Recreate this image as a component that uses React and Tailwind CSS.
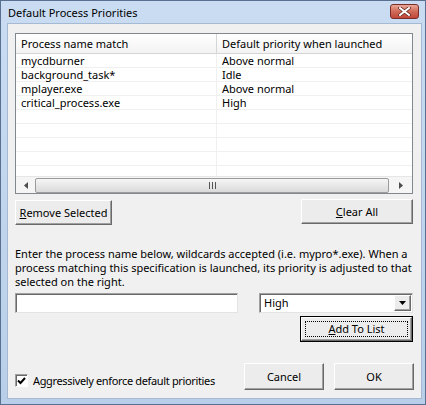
import React from "react";

const rows = [
  ["mycdburner", "Above normal"],
  ["background_task*", "Idle"],
  ["mplayer.exe", "Above normal"],
  ["critical_process.exe", "High"],
  ["", ""],
  ["", ""],
  ["", ""],
  ["", ""],
  ["", ""],
];

const btn =
  "flex items-center justify-center whitespace-nowrap bg-[#ececec] border border-t-white border-l-white border-r-[#696969] border-b-[#696969] shadow-[inset_-1px_-1px_#a0a0a0]";

const Button = ({ className, children }) => (
  <button type="button" className={`${btn} ${className}`}>
    {children}
  </button>
);

const App = () => {
  return (
    <div className="w-[426px] h-[405px] flex flex-col bg-gradient-to-b from-[#c9dcf2] to-[#b9cfe9] pl-[6px] pr-[3px] pb-[5px] font-['Noto_Sans',sans-serif] text-[11px] text-black leading-[14px] overflow-hidden border border-[#5a7090]">
      {/* Title bar */}
      <div className="h-[22px] flex items-center justify-between pl-[1px] pr-[3px]">
        <span className="text-[11px] text-black mt-[1px]">Default Process Priorities</span>
        <div className="w-[29px] h-[15px] mt-[-1px] rounded-[3px] border border-[#7a2e27] bg-gradient-to-b from-[#e8a898] via-[#d06a58] to-[#c0473a] flex items-center justify-center">
          <svg width="13" height="9" viewBox="0 0 13 9">
            <path
              d="M2 1 L11 8 M11 1 L2 8"
              stroke="#5a1d18"
              strokeWidth="3.4"
              strokeLinecap="square"
            />
            <path
              d="M2 1 L11 8 M11 1 L2 8"
              stroke="#ffffff"
              strokeWidth="2"
              strokeLinecap="square"
            />
          </svg>
        </div>
      </div>

      {/* Body */}
      <div className="flex-1 bg-[#f0f0f0] border border-[#a6b9d3] pl-[7px] pr-[10px] pt-[9px] flex flex-col">
        {/* List view */}
        <div className="w-[398px] h-[161px] border border-[#828790] bg-white flex flex-col">
          <div className="h-[20px] flex border-b border-[#d5d5d5] bg-gradient-to-b from-white to-[#f3f3f3] shrink-0">
            <div className="w-[201px] pl-[5px] pt-[1px] flex items-center border-r border-[#d5d5d5]">
              Process name match
            </div>
            <div className="flex-1 pl-[5px] pt-[1px] flex items-center">
              Default priority when launched
            </div>
          </div>
          <div className="flex-1 overflow-hidden">
            {rows.map((r, i) => (
              <div key={i} className="h-[14px] flex border-b border-[#f0f0f0]">
                <div className="w-[201px] pl-[5px] border-r border-[#f0f0f0] leading-[14px]">{r[0]}</div>
                <div className="flex-1 pl-[5px] leading-[14px]">{r[1]}</div>
              </div>
            ))}
          </div>
          {/* Horizontal scrollbar */}
          <div className="h-[17px] shrink-0 bg-[#f5f5f5] flex items-center border-t border-[#e6e6e6]">
            <div className="w-[19px] flex items-center justify-center">
              <svg width="4" height="7" viewBox="0 0 4 7">
                <path d="M4 0 L0 3.5 L4 7 Z" fill="#4d4d4d" />
              </svg>
            </div>
            <div className="flex-1 h-[15px] rounded-[2px] border border-[#9b9b9b] bg-gradient-to-b from-[#f6f6f6] to-[#dadada] flex items-center justify-center">
              <svg width="7" height="7" viewBox="0 0 7 7">
                <path d="M0.5 0 V7 M3.5 0 V7 M6.5 0 V7" stroke="#555" strokeWidth="1" />
              </svg>
            </div>
            <div className="w-[23px] flex items-center justify-center">
              <svg width="4" height="7" viewBox="0 0 4 7">
                <path d="M0 0 L4 3.5 L0 7 Z" fill="#4d4d4d" />
              </svg>
            </div>
          </div>
        </div>

        {/* Remove / Clear */}
        <div className="flex justify-between items-start mt-[5px] w-[398px]">
          <Button className="w-[97px] h-[25px] mt-[1px]">
            <span>
              <u>R</u>emove Selected
            </span>
          </Button>
          <Button className="w-[112px] h-[25px]">
            <span>
              <u>C</u>lear All
            </span>
          </Button>
        </div>

        {/* Description */}
        <p className="mt-[22px] leading-[14px] whitespace-nowrap">
          Enter the process name below, wildcards accepted (i.e. mypro*.exe). When a
          <br />
          process matching this specification is launched, its priority is adjusted to that
          <br />
          selected on the right.
        </p>

        {/* Input row */}
        <div className="flex justify-between mt-[4px] w-[398px]">
          <div className="w-[223px] h-[20px] bg-white border border-t-[#a0a0a0] border-l-[#a0a0a0] border-r-[#e3e3e3] border-b-[#e3e3e3] shadow-[inset_1px_1px_#696969]" />
          <div className="w-[154px] h-[20px] bg-white border border-t-[#a0a0a0] border-l-[#a0a0a0] border-r-[#e3e3e3] border-b-[#e3e3e3] shadow-[inset_1px_1px_#696969] flex items-center">
            <span className="flex-1 pl-[4px]">High</span>
            <div className={`${btn} w-[17px] h-[16px] mr-[1px]`}>
              <svg width="7" height="4" viewBox="0 0 7 4">
                <path d="M0 0 H7 L3.5 4 Z" fill="#000" />
              </svg>
            </div>
          </div>
        </div>

        {/* Add to list */}
        <div className="flex justify-end mt-[3px] w-[398px]">
          <div className="w-[113px] h-[26px] border border-black">
            <Button className="w-full h-full">
              <span className="w-[calc(100%-6px)] h-[calc(100%-6px)] border border-dotted border-black flex items-center justify-center">
                <span>
                  <u>A</u>dd To List
                </span>
              </span>
            </Button>
          </div>
        </div>

        {/* Bottom row */}
        <div className="flex items-center mt-[21px] w-[399px]">
          <label className="flex items-center gap-[5px] mt-[8px] flex-1 whitespace-nowrap">
            <span className="w-[13px] h-[13px] bg-white border border-t-[#a0a0a0] border-l-[#a0a0a0] border-r-white border-b-white shadow-[inset_1px_1px_#696969] flex items-center justify-center">
              <svg width="9" height="8" viewBox="0 0 9 8">
                <path d="M1 3.5 L3.5 6 L8 1" stroke="#000" strokeWidth="2" fill="none" />
              </svg>
            </span>
            <span className="tracking-[-0.35px]">Aggressively enforce default priorities</span>
          </label>
          <Button className="w-[80px] h-[27px]">Cancel</Button>
          <Button className="w-[80px] h-[27px] ml-[10px]">OK</Button>
        </div>
      </div>
    </div>
  );
};

export default App;
